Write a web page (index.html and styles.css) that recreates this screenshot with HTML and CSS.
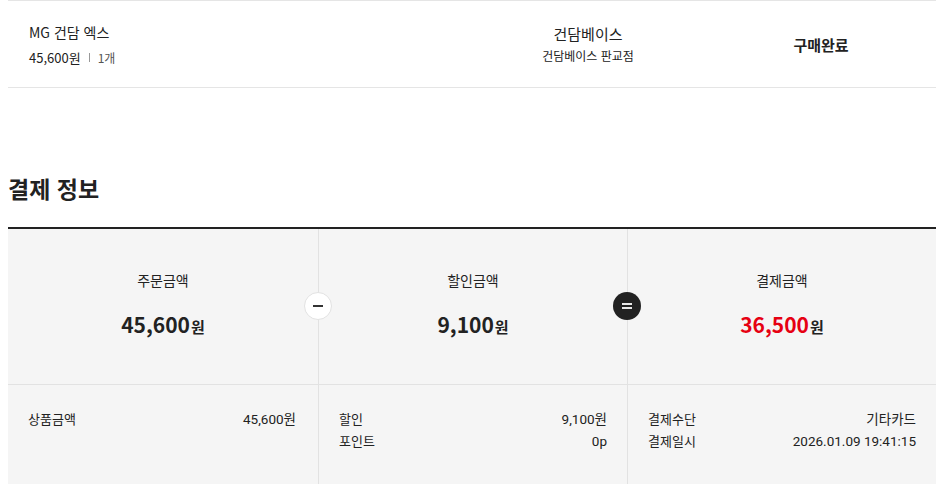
FILE: index.html
```html
<!DOCTYPE html>
<html lang="ko">
<head>
<meta charset="utf-8">
<link rel="stylesheet" href="styles.css">
</head>
<body>
<div class="wrap">
  <div class="item">
    <div class="prod">
      <div class="prod-name">MG 건담 엑스</div>
      <div class="prod-meta"><span>45,600원</span><span class="sep"></span><span class="qty">1개</span></div>
    </div>
    <div class="store">
      <div class="store-name">건담베이스</div>
      <div class="store-branch">건담베이스 판교점</div>
    </div>
    <div class="status">구매완료</div>
  </div>

  <h2 class="title">결제 정보</h2>

  <div class="pay">
    <div class="col">
      <div class="sum">
        <div class="sum-label">주문금액</div>
        <div class="sum-amt">45,600<span class="won">원</span></div>
      </div>
      <div class="detail">
        <div class="row"><span>상품금액</span><span class="val">45,600원</span></div>
      </div>
    </div>
    <div class="col">
      <span class="op op-minus"></span>
      <div class="sum">
        <div class="sum-label">할인금액</div>
        <div class="sum-amt">9,100<span class="won">원</span></div>
      </div>
      <div class="detail">
        <div class="row"><span>할인</span><span class="val">9,100원</span></div>
        <div class="row"><span>포인트</span><span class="val">0p</span></div>
      </div>
    </div>
    <div class="col">
      <span class="op op-eq"></span>
      <div class="sum">
        <div class="sum-label">결제금액</div>
        <div class="sum-amt red">36,500<span class="won">원</span></div>
      </div>
      <div class="detail">
        <div class="row"><span>결제수단</span><span class="val">기타카드</span></div>
        <div class="row"><span>결제일시</span><span class="val">2026.01.09 19:41:15</span></div>
      </div>
    </div>
  </div>
</div>
</body>
</html>
```
FILE: styles.css
```css
* { box-sizing: border-box; }
html, body { margin: 0; padding: 0; background: #fff; }
body {
  font-family: "Noto Sans CJK KR", "Noto Sans", sans-serif;
  color: #222;
}
.wrap { width: 928px; margin-left: 8px; }

.item {
  display: grid;
  grid-template-columns: 1fr 236px 230px;
  align-items: center;
  height: 88px;
  border-top: 1px solid #e5e5e5;
  border-bottom: 1px solid #e5e5e5;
}
.prod { padding-left: 21px; }
.prod-name { font-size: 14px; line-height: 20px; }
.prod-meta {
  margin-top: 7px;
  font-size: 13px;
  line-height: 18px;
  display: flex;
  align-items: center;
}
.sep { width: 1px; height: 9px; background: #999; margin: 0 8px; }
.qty { color: #555; font-size: 12px; }
.store { text-align: center; }
.store-name { font-size: 15px; line-height: 20px; }
.store-branch { font-size: 12px; line-height: 18px; margin-top: 3px; }
.status { text-align: center; font-size: 15px; font-weight: 700; }

.title {
  margin: 83px 0 0;
  font-size: 23px;
  line-height: 34px;
  font-weight: 700;
  height: 56px;
}

.pay {
  display: grid;
  grid-template-columns: 310px 309px 309px;
  background: #f5f5f5;
  border-top: 2px solid #222;
}
.col { position: relative; border-left: 1px solid #e2e2e2; }
.col:first-child { border-left: none; }
.sum {
  height: 156px;
  border-bottom: 1px solid #e2e2e2;
  text-align: center;
  padding-top: 41px;
}
.sum-label { font-size: 14px; line-height: 20px; }
.sum-amt {
  margin-top: 19px;
  font-size: 21px;
  font-weight: 700;
  line-height: 30px;
}
.sum-amt.red { color: #e60012; }
.won { font-size: 15px; color: #222; margin-left: 1px; }
.detail { height: 99px; padding: 23px 20px 0 20px; }
.col:first-child .detail { padding-right: 22px; }
.row {
  display: flex;
  justify-content: space-between;
  font-size: 13px;
  line-height: 22px;
}
.val { font-family: Roboto, "Noto Sans CJK KR", sans-serif; font-size: 13.5px; }
.op {
  position: absolute;
  left: -15px;
  top: 63px;
  width: 28px;
  height: 28px;
  border-radius: 50%;
}
.op-minus { background: #fff; border: 1px solid #e2e2e2; }
.op-minus::before {
  content: "";
  position: absolute;
  left: 8px; top: 12px;
  width: 10px; height: 2px;
  background: #333;
}
.op-eq { background: #222; }
.op-eq::before, .op-eq::after {
  content: "";
  position: absolute;
  left: 9px;
  width: 10px; height: 2px;
  background: #e8e8e8;
}
.op-eq::before { top: 11px; }
.op-eq::after { top: 15px; }
```
